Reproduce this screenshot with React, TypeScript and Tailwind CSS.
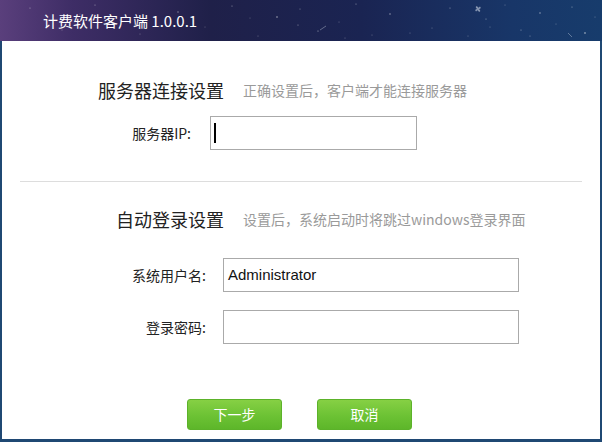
import React from "react";

const stars: [number, number, number, number][] = [
  [30, 8, 0.6, 0.5], [62, 30, 0.5, 0.4], [95, 5, 0.6, 0.5], [140, 34, 0.5, 0.4], [178, 12, 0.7, 0.5],
  [205, 27, 0.5, 0.35], [232, 6, 0.6, 0.5], [258, 36, 0.5, 0.4], [277, 17, 0.8, 0.6], [300, 9, 0.5, 0.5],
  [318, 31, 0.6, 0.6], [339, 22, 0.5, 0.4], [356, 4, 0.6, 0.5], [372, 35, 0.5, 0.4], [390, 14, 0.7, 0.6],
  [432, 28, 0.5, 0.4], [450, 8, 0.6, 0.5], [468, 36, 0.5, 0.4], [486, 19, 0.6, 0.5], [505, 5, 0.5, 0.4],
  [521, 30, 0.6, 0.5], [540, 13, 0.7, 0.6], [556, 24, 0.5, 0.4], [572, 7, 0.6, 0.5], [585, 33, 0.8, 0.7],
  [595, 17, 0.5, 0.4], [120, 20, 0.5, 0.3], [160, 26, 0.5, 0.3], [250, 18, 0.5, 0.35], [410, 33, 0.5, 0.4],
  [345, 38, 0.5, 0.4], [298, 25, 0.6, 0.5], [530, 36, 0.5, 0.5], [490, 27, 0.5, 0.4], [80, 14, 0.5, 0.35],
];

const font = { fontFamily: '"Microsoft YaHei", "Noto Sans CJK SC", sans-serif' };

export default function App() {
  return (
    <div className="w-[602px] h-[442px] flex flex-col bg-[#1f4873] overflow-hidden" style={font}>
      <div className="relative h-[41px] shrink-0 bg-[linear-gradient(90deg,#5a3f7c_0%,#3e2d66_12%,#1f2049_35%,#1a2452_60%,#183668_85%,#173c6c_100%)] flex items-center">
        <svg className="absolute inset-0" width="602" height="41">
          {stars.map(([x, y, r, o], i) => (
            <circle key={i} cx={x} cy={y} r={r} fill="#ffffff" opacity={o} />
          ))}
          <g transform="translate(478,9) rotate(-35)" opacity="0.6">
            <rect x="-0.8" y="-3" width="1.6" height="6" fill="#dfe6f0" />
            <rect x="-3" y="-0.8" width="6" height="1.6" fill="#c9d3e2" />
          </g>
          <line x1="320" y1="30" x2="326" y2="26" stroke="#cfd8e6" strokeWidth="0.8" opacity="0.5" />
          <line x1="568" y1="33" x2="572" y2="37" stroke="#cfd8e6" strokeWidth="0.8" opacity="0.5" />
        </svg>
        <span className="relative ml-[43px] text-[15px] text-white leading-none">计费软件客户端 1.0.0.1</span>
      </div>
      <div className="flex-1 mx-[2px] mb-[3px] bg-white flex flex-col">
        <div className="mt-[37px] h-[24px] flex items-center">
          <div className="w-[222px] text-right text-[18px] text-[#222] leading-none">服务器连接设置</div>
          <div className="ml-[19px] text-[14px] text-[#9a9a9a] leading-none">正确设置后，客户端才能连接服务器</div>
        </div>
        <div className="mt-[14px] flex items-center">
          <div className="w-[189px] text-right text-[14px] text-[#222]">服务器IP:</div>
          <div className="ml-[19px] w-[207px] h-[34px] border border-[#aaaaaa] flex items-center">
            <div className="ml-[3px] w-[2px] h-[20px] bg-black" />
          </div>
        </div>
        <div className="mt-[31px] mx-[18px] h-px bg-[#dddddd]" />
        <div className="mt-[25px] h-[24px] flex items-center">
          <div className="w-[222px] text-right text-[18px] text-[#222] leading-none">自动登录设置</div>
          <div className="ml-[19px] text-[14px] text-[#9a9a9a] leading-none">设置后，系统启动时将跳过windows登录界面</div>
        </div>
        <div className="mt-[27px] flex items-center">
          <div className="w-[204px] text-right text-[14px] text-[#222]">系统用户名:</div>
          <div className="ml-[17px] w-[296px] h-[34px] border border-[#aaaaaa] flex items-center">
            <span className="ml-[4px] text-[15px] text-[#111]" style={{ fontFamily: '"Segoe UI", "Liberation Sans", Arial, sans-serif' }}>Administrator</span>
          </div>
        </div>
        <div className="mt-[18px] flex items-center">
          <div className="w-[204px] text-right text-[14px] text-[#222]">登录密码:</div>
          <div className="ml-[17px] w-[296px] h-[34px] border border-[#aaaaaa]" />
        </div>
        <div className="mt-[55px] flex gap-[35px] pl-[185px]">
          <button className="w-[95px] h-[31px] rounded-[3px] border border-[#5cb22a] bg-[linear-gradient(180deg,#86d044_0%,#6cc234_55%,#5db62a_100%)] text-white text-[14px]">下一步</button>
          <button className="w-[95px] h-[31px] rounded-[3px] border border-[#5cb22a] bg-[linear-gradient(180deg,#86d044_0%,#6cc234_55%,#5db62a_100%)] text-white text-[14px]">取消</button>
        </div>
      </div>
    </div>
  );
}
